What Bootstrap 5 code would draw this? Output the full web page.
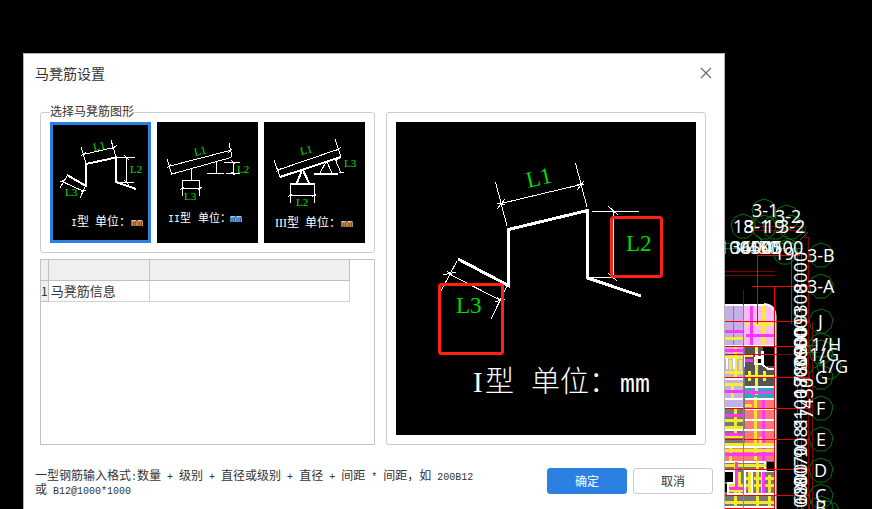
<!DOCTYPE html>
<html lang="zh-CN">
<head>
<meta charset="utf-8">
<meta name="viewport" content="width=device-width, initial-scale=1">
<title>马凳筋设置</title>
<link href="https://cdn.jsdelivr.net/npm/bootstrap@5.3.0/dist/css/bootstrap.min.css" rel="stylesheet">
<style>
body { background: #000; color: #333; font-family: "Noto Sans CJK SC", sans-serif; font-size: 12px; line-height: 14px; }
.desktop { min-height: 100vh; padding-left: 23px; }
.settings { margin-top: 53px; border: 1px solid #b4b4b4; border-bottom: 0; background: #fff; min-width: 0; }
.titlebar { height: 38px; padding: 0 12px 0 11px; }
.titlebar h1 { font-size: 14px; line-height: 20px; font-weight: 400; }
.close-x { width: 12px; height: 12px; line-height: 0; }
.panes { padding: 20px 18px 0 16px; gap: 11px; }
.pane-left { flex: 335 1 335px; min-width: 0; gap: 6px; }
.pane-right { flex: 320 1 320px; min-width: 0; padding: 9px; }
.frame { border: 1px solid #ccc; border-radius: 3px; }
.shapes { padding: 9px; gap: 6px; }
.shapes legend { position: absolute; top: -10px; left: 9px; width: auto; font-size: 12px; line-height: 16px; background: #fff; }
.shape-option { flex: 1 1 0; background: #000; cursor: pointer; }
.btn-check:checked + .shape-option { outline: 3px solid #2b80e2; outline-offset: -3px; }
.grid-box { border: 1px solid #c3c3c3; min-height: 185px; }
.info-table { width: 309px; font-size: 13px; border-collapse: separate; border-spacing: 0; }
.info-table th, .info-table td { height: 21px; padding: 0; line-height: 20px; font-weight: 400; border: solid #d2d2d2; border-width: 0 1px 1px 0; white-space: nowrap; }
.info-table th { background: #efefef; border-color: #c0c0c0; }
.info-table td { padding-left: 2px; }
.info-table .col-num { width: 7px; }
.info-table .col-name { width: 101px; }
.info-table tbody th { font-size: 12px; }
.foot { padding: 23px 11px 14px 11px; }
.foot-actions { gap: 6px; }
.hint .half { font-family: "Liberation Mono", monospace; font-size: 10px; line-height: 0; white-space: pre; }
.foot .btn { width: 80px; height: 26px; padding: 0; font-size: 12px; line-height: 24px; border-radius: 3px; }
.btn-ok { background: #2b80e2; border-color: #2b80e2; color: #fff; }
.btn-no { background: #fff; border-color: #ccc; color: #333; }
.btn-ok:hover { background: #1f6fcb; color: #fff; }
.btn-no:hover { background: #f3f3f3; border-color: #bbb; }
.diagram { width: 100%; height: auto; background: #000; }
.diagram .thin { fill: none; stroke: #fff; stroke-width: 1; shape-rendering: crispEdges; }
.diagram .bar { fill: none; stroke: #fff; stroke-width: 2; shape-rendering: crispEdges; }
.diagram .bar-lg { fill: none; stroke: #fff; stroke-width: 3; shape-rendering: crispEdges; }
.diagram .dim { fill: #00e000; font: 11px "Liberation Serif", serif; }
.diagram .dim-lg { fill: #00dc00; font: 23px "Liberation Serif", serif; }
.diagram .cap { fill: #fff; font: 12px "Noto Sans CJK SC", sans-serif; }
.diagram .cap-sm { fill: #fff; font: 11px "Noto Sans CJK SC", sans-serif; }
.diagram .cap-lg { fill: #fff; font: 300 29px "Noto Sans CJK SC", sans-serif; }
.diagram .mono { font-family: "Liberation Mono", monospace; font-size: 10px; }
.diagram .mono-lg { font-family: "Liberation Mono", monospace; font-size: 25px; }
.diagram .serif { font-family: "Liberation Serif", serif; }
.diagram .note { fill: none; stroke: #ff2113; stroke-width: 3; }
.plan { width: 147px; height: 509px; }
.plan text { font: 18px "Open Sans", "Noto Sans", sans-serif; fill: #fff; }
</style>
</head>
<body>
<main class="desktop d-flex align-items-stretch overflow-hidden">
  <section class="settings flex-grow-1 d-flex flex-column" role="dialog" aria-labelledby="dlg-title">
    <header class="titlebar d-flex align-items-center justify-content-between">
      <h1 id="dlg-title" class="mb-0">马凳筋设置</h1>
      <button type="button" class="close-x border-0 bg-transparent p-0" aria-label="关闭">
        <svg width="12" height="12" viewBox="0 0 12 12"><path d="M1 1L11 11M11 1L1 11" stroke="#666" stroke-width="1.1"/></svg>
      </button>
    </header>

    <div class="panes d-flex">
      <div class="pane-left d-flex flex-column">
        <fieldset class="shapes frame position-relative d-flex">
          <legend class="mb-0">选择马凳筋图形</legend>
          <input class="btn-check" type="radio" name="shape" id="shape1" checked>
          <label class="shape-option" for="shape1">
            <svg class="diagram d-block" viewBox="50 122 101 121">
              <path class="bar" d="M67 175L86 186V164L116 157.500V182L136 189"/>
              <path class="thin" d="M81 147L86 163M111 140L116 157M83 154.500L114 147.500M81 156l5-4M112 149l5-4M117 157.500H135M117 182.500H134M126.500 158V182M124 155l5 5M124 180l5 5M60 188L67 176M80 198L86 185M61 181L84 191.500M60 182l5-2M81 192l5-2"/>
              <text class="dim" transform="translate(94 151) rotate(-13)">L1</text>
              <text class="dim" x="130" y="173">L2</text>
              <text class="dim" x="65" y="196">L3</text>
              <text class="cap" y="226"><tspan class="mono" x="71">I</tspan><tspan x="77">型</tspan><tspan x="95">单位：</tspan><tspan class="mono" x="131">mm</tspan></text>
            </svg>
          </label>
          <input class="btn-check" type="radio" name="shape" id="shape2">
          <label class="shape-option" for="shape2">
            <svg class="diagram d-block" viewBox="157 122 101 121">
              <path class="thin" d="M168 166.500L230 150.500M167 159L172 175M229 143L232 157M172 174L231 157.500M167 168l4-4M228 153l4-4M191.500 169V180M182 180.500H200M181 188.500H200M182.500 180V196M199.500 180V196M180 190l4-3M198 190l4-3M216.500 162V173M207 173.500H224M224 162.500H240M226 173.500H240M233.500 162V175M231 160l4 4M231 172l4 3"/>
              <text class="dim" transform="translate(195 156) rotate(-13)">L1</text>
              <text class="dim" x="237" y="173">L2</text>
              <text class="dim" x="184" y="200">L3</text>
              <text class="cap-sm" y="222"><tspan class="mono" x="168">II</tspan><tspan x="180">型</tspan><tspan x="198">单位：</tspan><tspan class="mono" x="230">mm</tspan></text>
            </svg>
          </label>
          <input class="btn-check" type="radio" name="shape" id="shape3">
          <label class="shape-option" for="shape3">
            <svg class="diagram d-block" viewBox="264 122 101 121">
              <path class="bar" d="M280 177L341 157M302 170L297 183M303 170L309 183M290 184H315M314 174H338"/>
              <path class="thin" d="M278 170L339 149M274 160L280 177M335 139L341 157M276 172l5-4M336 151l5-4M326 162L320 173M327 162L332 173M290.500 184V203M314.500 184V203M289 195.500H316M288 197l4-3M312 197l4-3M335 159L341 173M339 172H344M335 161l3-2"/>
              <text class="dim" transform="translate(301 155) rotate(-13)">L1</text>
              <text class="dim" x="296" y="206">L2</text>
              <text class="dim" x="344" y="167">L3</text>
              <text class="cap" y="227"><tspan class="serif" x="275">III</tspan><tspan x="287">型</tspan><tspan x="305">单位：</tspan><tspan class="mono" x="341">mm</tspan></text>
            </svg>
          </label>
        </fieldset>

        <div class="grid-box flex-grow-1">
          <table class="info-table">
            <thead><tr><th class="col-num"></th><th class="col-name"></th><th></th></tr></thead>
            <tbody><tr><th scope="row">1</th><td>马凳筋信息</td><td></td></tr></tbody>
          </table>
        </div>
      </div>

      <div class="pane-right frame">
        <svg class="diagram d-block" viewBox="396 122 300 313" role="img" aria-label="I型马凳筋">
          <path class="bar-lg" d="M458 259L508.500 285.500V229.500L587.500 210.500V278L641 296"/>
          <path class="thin" d="M495.500 182L507 226M575.500 163L587 207M501 203.500L581 184.500M497 209l8-10M497 203l8 2M577 190l7-9M577 185l7-1M592 211.500H639M588 277.500H614M613.500 211V278M608 206l10 9M608 273l9 8M457 261L441 291M507 286L491 319M450 274.500L501 300.500M443 275l13-3M447 271l7 6M495 302l10-3M497 297l6 6"/>
          <rect class="note" x="611.500" y="217.500" width="50" height="59" rx="2"/>
          <rect class="note" x="439.500" y="284.500" width="63" height="69" rx="2"/>
          <text class="dim-lg" transform="translate(528 188) rotate(-13)">L1</text>
          <text class="dim-lg" x="626" y="251">L2</text>
          <text class="dim-lg" x="456" y="313">L3</text>
          <text class="cap-lg" y="392"><tspan class="serif" x="473">I</tspan><tspan x="485">型</tspan><tspan x="531">单位：</tspan><tspan class="mono-lg" x="620">mm</tspan></text>
        </svg>
      </div>
    </div>

    <footer class="foot d-flex justify-content-between align-items-start">
      <p class="hint mb-0">一型钢筋输入格式<span class="half">:</span>数量<span class="half"> + </span>级别<span class="half"> + </span>直径或级别<span class="half"> + </span>直径<span class="half"> + </span>间距<span class="half"> * </span>间距，如<span class="half"> 200B12</span><br>或<span class="half"> B12@1000*1000</span></p>
      <div class="foot-actions d-flex flex-shrink-0">
        <button type="button" class="btn btn-ok">确定</button>
        <button type="button" class="btn btn-no">取消</button>
      </div>
    </footer>
  </section>

  <svg class="plan flex-shrink-0" viewBox="725 0 147 509" role="img" aria-label="轴网平面图">
    <defs><path id="bubble" d="M0-12L8-9L12-2L10 7L4 12L-4 12L-10 7L-12-2L-8-9Z" fill="none" stroke="#087010"/></defs>
    <!-- floor plan -->
    <path d="M725 304H765Q775 304 775 315V509H725Z" fill="#777"/>
    <path d="M725 305H744V408H725Z" fill="#c5b0e6"/>
    <path d="M744 305H764Q774 305 774 316V346H744Z" fill="#ffb8fa"/>
    <path d="M745 347H775V388H745Z" fill="#555"/>
    <path d="M763 347H776V366H763ZM755 358H762V364H755Z" fill="#000"/>
    <path d="M745 400H775V461H745ZM725 447H745V461H725Z" fill="#ff7878"/>
    <path d="M745 388H775V399H745Z" fill="#18b4b0"/>
    <g shape-rendering="crispEdges" fill="none">
      <path d="M733.500 305V346M757.500 345V352" stroke="#35b535"/>
      <path d="M725 338H744M746 324H775M763 305V345M725 357H744M725 372H744M735 347V378M730 360V370M740 360V370M756 347V395M745 376H775M749 371V381M764 371V381M745 355H753M725 384H744M732 384V400" stroke="#f3ee36" stroke-width="3"/>
      <path d="M725 331H744M746 335H775M751 305V345M725 350H744M745 360H753M725 391H744M745 392H775M752 388V397M763 397V461" stroke="#ff35ff" stroke-width="3"/>
      <path d="M755 397V460M760 437V448M725 420H744M725 427H744M735 408V434M725 444H775M725 450H775M745 405H752M725 436H744M730 446V461" stroke="#eee82e" stroke-width="3"/>
      <path d="M725 415H744M725 434H744M725 454H775" stroke="#ff35ff" stroke-width="3"/>
      <path d="M725 304.500H764M725 346H775M727 358V369M734 358V369M744 354V367M725 379H744M745 386.500H775M745 398.500H775M725 408H744M745 409H775M745 420H775M725 430H775M725 447H775M725 461.500H765V471H775M725 399H744" stroke="#fff" stroke-width="2"/>
      <path d="M757 352V357H762V352H763V365L768 369H775M755 358H762V364H755Z" stroke="#fff" stroke-width="2"/>
      <path d="M725 465H766M725 485H775M725 502H775M735 462V509M749 470V495M757 462V509M769 475V509M745 478H775M739 472V495M725 490H745M762 470V495" stroke="#eee82e" stroke-width="3"/>
      <path d="M736 462V487M763 470V495M730 488H748M752 475V494" stroke="#ff35ff" stroke-width="3"/>
      <path d="M725 471H734V483H728V494H745V471H752V495M745 471H775M745 494H775V472M725 507H775" stroke="#fff" stroke-width="2"/>
    </g>
    <path d="M725 472H733V482H725ZM767 462H776V471H767ZM725 484H727V492H725Z" fill="#000"/>
    <path d="M764 304Q775 305 775.500 316V509" fill="none" stroke="#fff" stroke-width="2"/>
    <!-- grid axes -->
    <g shape-rendering="crispEdges" fill="none">
      <path d="M745 226.500H805V237M725 271.500H775M725 275.500H775M753 230.500H800M743.500 290V509M808.500 237V509M803 237.500H810M812.500 322V509M775 354.500H812" stroke="#840000"/>
      <path d="M757.500 255V324M791.500 255V324M774.500 286V509M757 255.500H800M752 286.500H815M725 321.500H810M725 346.500H810M725 354.500H775M725 377.500H810M725 408.500H810M725 439.500H810M725 469.500H810M725 495.500H810M725 508.500H775" stroke="#f00000"/>
      <path d="M743.500 305V509" stroke="#e06060"/>
      <path d="M725 243.500H803M725 248.500H803M797.500 250V509M801.500 250V509M757 235L764 243M785 236L795 242M800 240L808 232M796 345H818M796 352H818" stroke="#087010"/>
    </g>
    <use href="#bubble" x="764" y="211"/><use href="#bubble" x="787" y="217"/>
    <use href="#bubble" x="743" y="226"/><use href="#bubble" x="764" y="227"/>
    <use href="#bubble" x="775" y="227"/><use href="#bubble" x="791" y="227"/>
    <use href="#bubble" x="785" y="252"/><use href="#bubble" x="821" y="255"/>
    <use href="#bubble" x="821" y="286"/><use href="#bubble" x="821" y="321"/>
    <use href="#bubble" x="821" y="345"/><use href="#bubble" x="821" y="352"/>
    <use href="#bubble" x="829" y="367"/><use href="#bubble" x="821" y="377"/>
    <use href="#bubble" x="821" y="408"/><use href="#bubble" x="821" y="439"/>
    <use href="#bubble" x="821" y="470"/><use href="#bubble" x="821" y="496"/>
    <use href="#bubble" x="821" y="508"/><use href="#bubble" x="828" y="513"/>
    <text x="752" y="217">3-1</text><text x="775" y="223">3-2</text>
    <text x="733" y="233">18</text><text x="744" y="233">3-1</text><text x="764" y="233">19</text><text x="779" y="233">3-2</text>
    <text x="719" y="254">100</text><text x="731" y="254">3600</text><text x="740" y="254">4500</text><text x="748" y="254">450</text><text x="762" y="254">4500</text>
    <text x="774" y="260">19</text><text x="807" y="262">3-B</text><text x="807" y="293">3-A</text>
    <text x="818" y="328">J</text><text x="811" y="351">1/H</text><text x="809" y="361">1/G</text><text x="818" y="373">1/G</text>
    <text x="815" y="384">G</text><text x="816" y="415">F</text><text x="816" y="446">E</text><text x="814" y="477">D</text><text x="815" y="502">C</text><text x="815" y="514">B</text>
    <g transform="translate(807 0) rotate(-90)">
      <text x="-293" y="0">8000</text><text x="-325" y="0">9300</text><text x="-349" y="0">6000</text>
      <text x="-357" y="0">900</text><text x="-369" y="0">3600</text><text x="-386" y="0">7800</text>
      <text x="-398" y="0">1800</text><text x="-419" y="6">7430</text><text x="-430" y="0">8100</text>
      <text x="-458" y="0">9081</text><text x="-487" y="0">8070</text><text x="-505" y="0">6800</text><text x="-518" y="0">3000</text>
    </g>
  </svg>
</main>
<script src="https://cdn.jsdelivr.net/npm/bootstrap@5.3.0/dist/js/bootstrap.bundle.min.js"></script>
</body>
</html>
